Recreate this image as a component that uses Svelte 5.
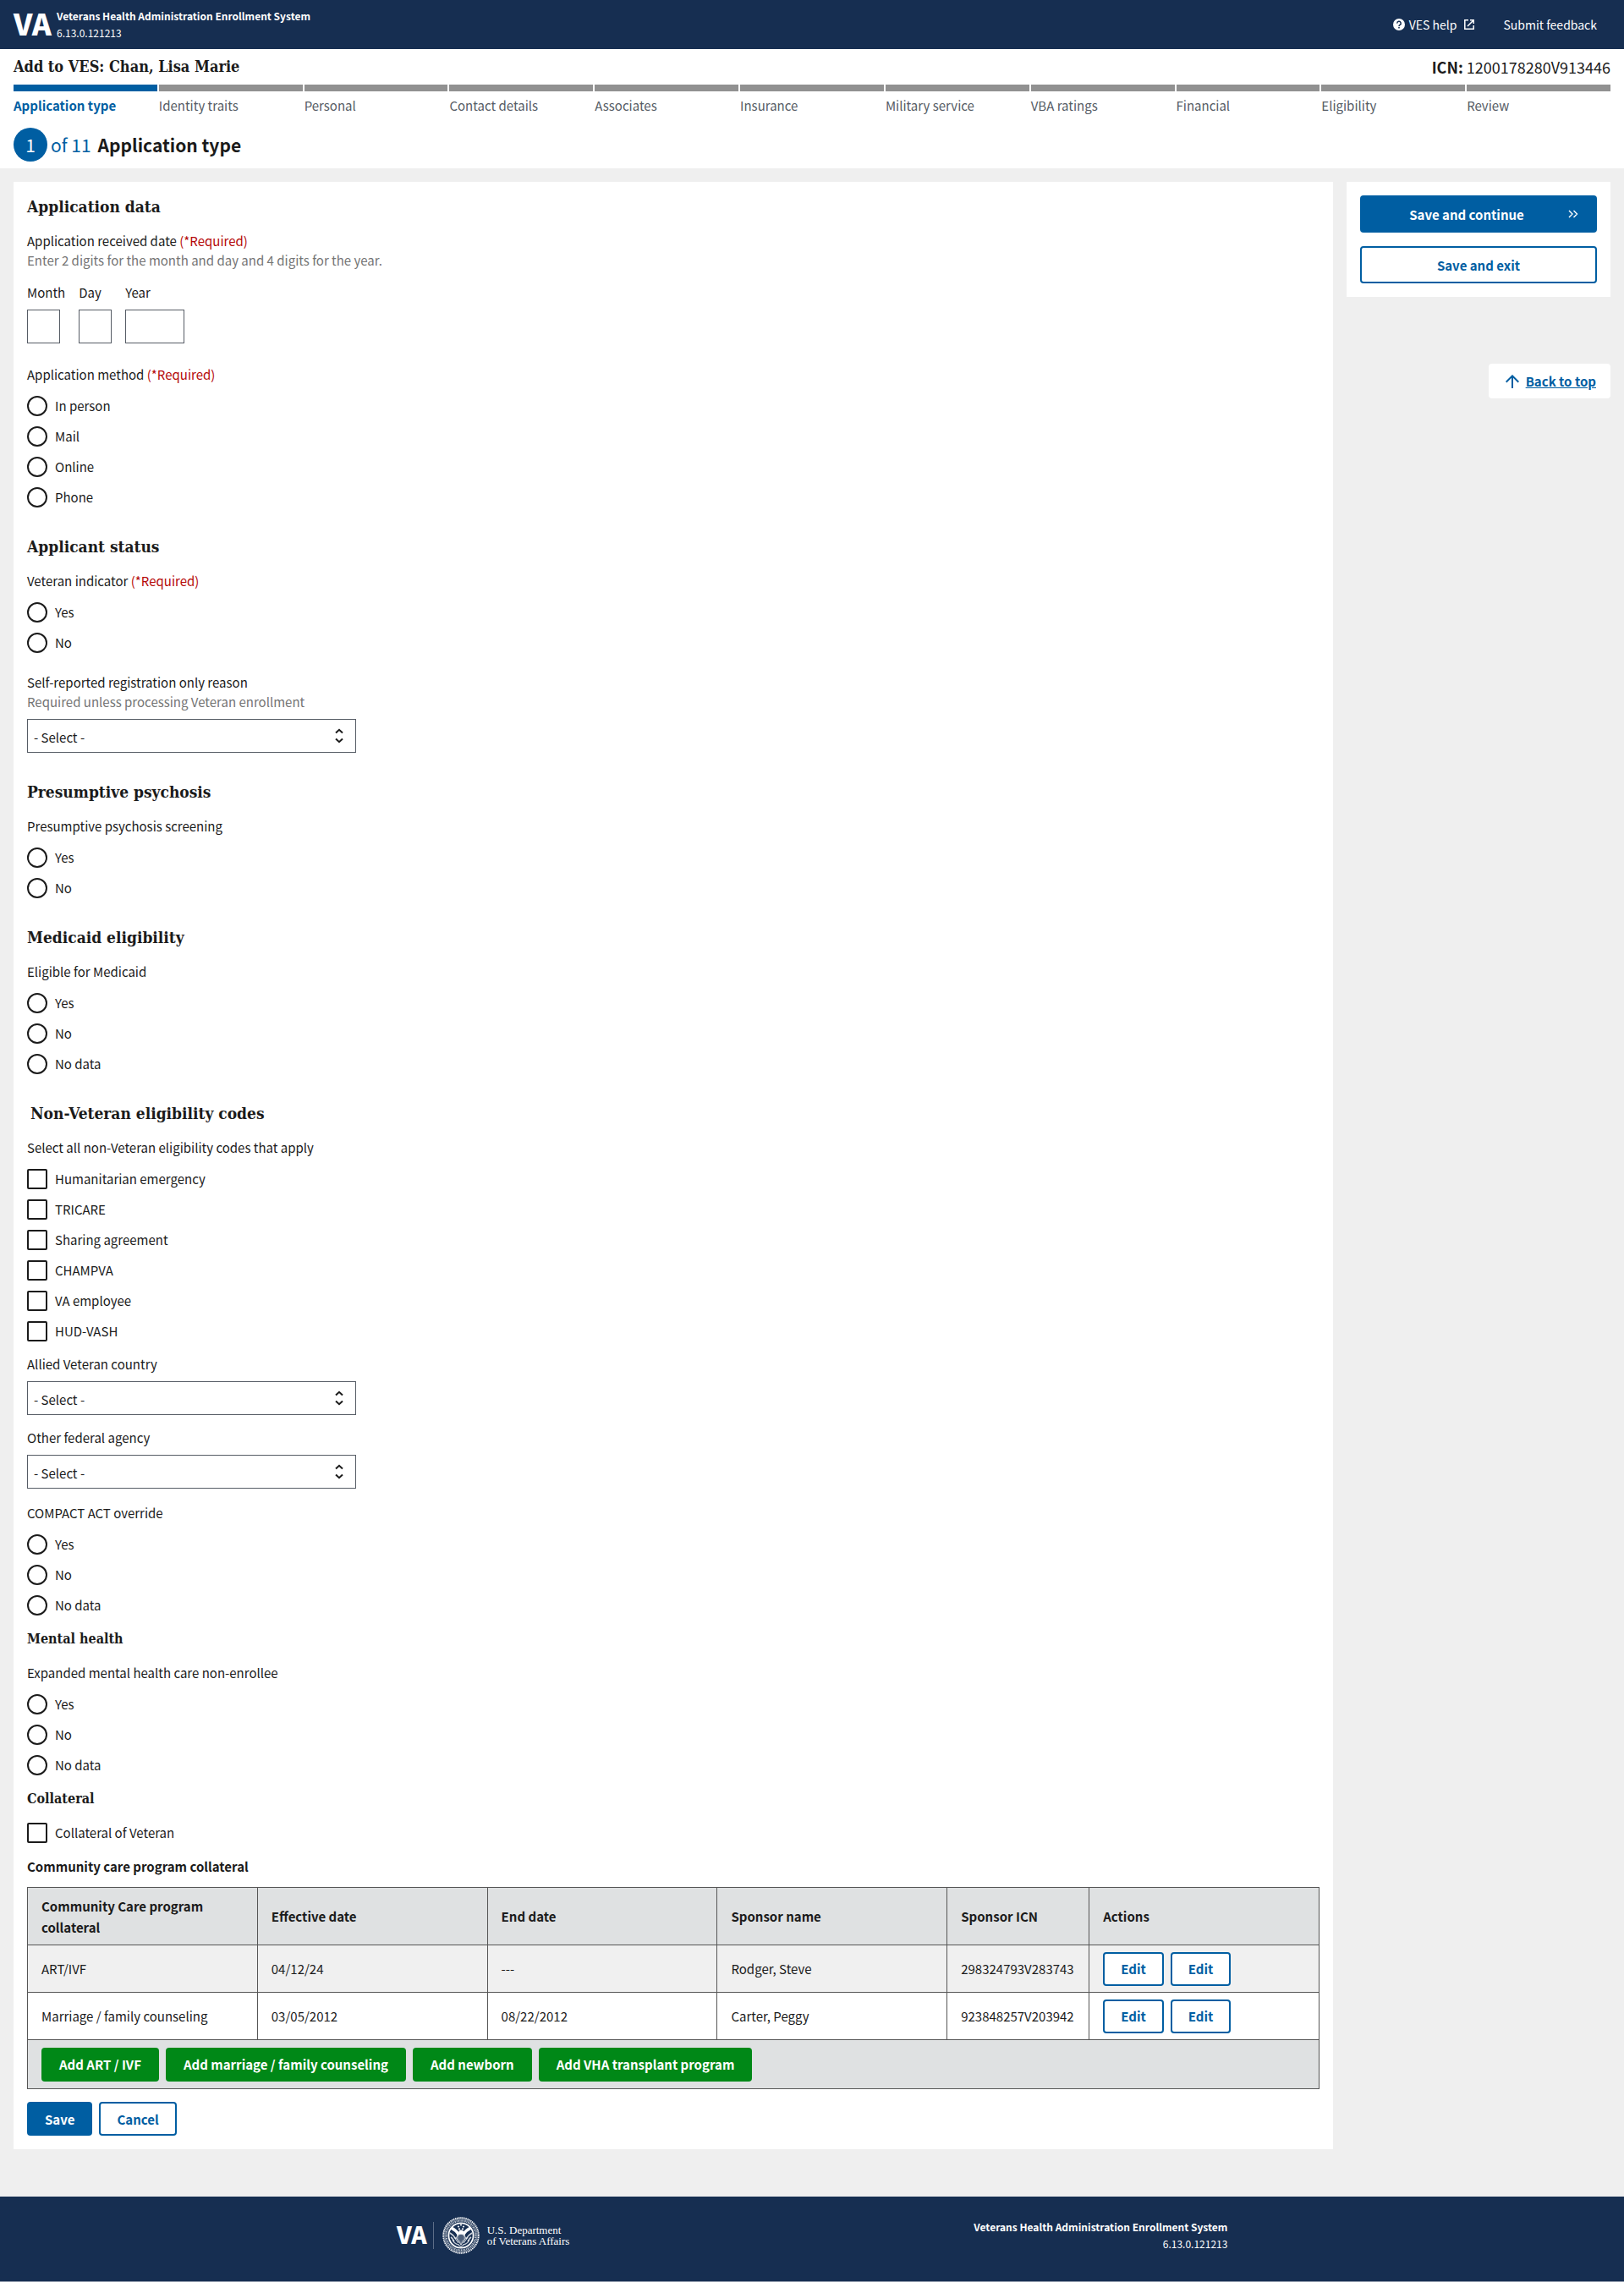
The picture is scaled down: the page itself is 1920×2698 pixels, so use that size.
<script lang="ts">
  interface ChoiceGroup {
    legend: string
    name: string
    type?: 'radio' | 'checkbox'
    required?: boolean
    options: string[]
  }

  interface SelectField {
    id: string
    label: string
    hint?: string
  }

  const steps = [
    'Application type',
    'Identity traits',
    'Personal',
    'Contact details',
    'Associates',
    'Insurance',
    'Military service',
    'VBA ratings',
    'Financial',
    'Eligibility',
    'Review',
  ];
  const currentStep = 0;

  const dateParts = [
    {id: 'month', label: 'Month', length: 2},
    {id: 'day', label: 'Day', length: 2},
    {id: 'year', label: 'Year', length: 4},
  ];

  const columns = [
    'Community Care program collateral',
    'Effective date',
    'End date',
    'Sponsor name',
    'Sponsor ICN',
    'Actions',
  ];

  const programs = [
    {program: 'ART/IVF', start: '04/12/24', end: '---', sponsor: 'Rodger, Steve', icn: '298324793V283743'},
    {program: 'Marriage / family counseling', start: '03/05/2012', end: '08/22/2012', sponsor: 'Carter, Peggy', icn: '923848257V203942'},
  ];

  const addActions = ['Add ART / IVF', 'Add marriage / family counseling', 'Add newborn', 'Add VHA transplant program'];
</script>

{#snippet choices({legend, name, type = 'radio', required = false, options}: ChoiceGroup)}
  <fieldset class="group">
    <legend>{legend} {#if required}<span class="required">(*Required)</span>{/if}</legend>
    <div class="options">
      {#each options as option}
        <label class="choice">
          <input {type} {name} value={option} />
          <span>{option}</span>
        </label>
      {/each}
    </div>
  </fieldset>
{/snippet}

{#snippet dropdown({id, label, hint}: SelectField)}
  <div class="field">
    <label for={id}>{label}</label>
    {#if hint}<p class="hint">{hint}</p>{/if}
    <div class="select">
      <select {id}>
        <option>- Select -</option>
      </select>
      <svg width="10" height="18" viewBox="0 0 10 18" fill="none" stroke="currentColor" stroke-width="2" aria-hidden="true">
        <path d="M1 5.5 5 1.8l4 3.7M1 12.5l4 3.7 4-3.7" />
      </svg>
    </div>
  </div>
{/snippet}

{#snippet vaMark()}
  <svg class="va" width="44" height="28" viewBox="0 0 44 28" role="img" aria-label="VA">
    <text x="0" y="27">VA</text>
  </svg>
{/snippet}

<div class="page">
  <header class="topbar">
    <div class="brand">
      {@render vaMark()}
      <div class="system">
        <strong>Veterans Health Administration Enrollment System</strong>
        <span>6.13.0.121213</span>
      </div>
    </div>
    <nav class="links" aria-label="Support">
      <a href="#help">
        <svg width="14" height="14" viewBox="0 0 14 14" aria-hidden="true">
          <circle cx="7" cy="7" r="7" fill="#fff" />
          <path d="M4.8 5.6a2.2 2.2 0 1 1 3.3 1.8c-.8.5-1.1.8-1.1 1.5" fill="none" stroke="#162e51" stroke-width="1.5" />
          <circle cx="7" cy="10.7" r=".9" fill="#162e51" />
        </svg>
        VES help
        <svg class="external" width="14" height="14" viewBox="0 0 14 14" fill="none" stroke="currentColor" stroke-width="1.5" aria-hidden="true">
          <path d="M6 1.8H1.8v10.4h10.4V8M8 1.8h4.2V6M12 2 5 9" />
        </svg>
      </a>
      <a href="#feedback">Submit feedback</a>
    </nav>
  </header>

  <div class="subheader">
    <div class="person">
      <h1>Add to VES: Chan, Lisa Marie</h1>
      <p><strong>ICN:</strong> 1200178280V913446</p>
    </div>
    <ol class="steps">
      {#each steps as step, i}
        <li class:current={i === currentStep}>{step}</li>
      {/each}
    </ol>
    <div class="progress">
      <span class="number">{currentStep + 1}</span>
      <span class="total">of {steps.length}</span>
      <strong>{steps[currentStep]}</strong>
    </div>
  </div>

  <div class="layout">
    <main class="card">
      <section>
        <h2>Application data</h2>
        <fieldset class="date">
          <legend>Application received date <span class="required">(*Required)</span></legend>
          <p class="hint">Enter 2 digits for the month and day and 4 digits for the year.</p>
          <div class="parts">
            {#each dateParts as part}
              <div class="part">
                <label for={part.id}>{part.label}</label>
                <input id={part.id} class:wide={part.length === 4} type="text" inputmode="numeric" maxlength={part.length} />
              </div>
            {/each}
          </div>
        </fieldset>
        {@render choices({legend: 'Application method', name: 'method', required: true, options: ['In person', 'Mail', 'Online', 'Phone']})}
      </section>

      <section>
        <h2>Applicant status</h2>
        {@render choices({legend: 'Veteran indicator', name: 'veteran', required: true, options: ['Yes', 'No']})}
        <div class="spaced">
          {@render dropdown({id: 'reason', label: 'Self-reported registration only reason', hint: 'Required unless processing Veteran enrollment'})}
        </div>
      </section>

      <section>
        <h2>Presumptive psychosis</h2>
        {@render choices({legend: 'Presumptive psychosis screening', name: 'psychosis', options: ['Yes', 'No']})}
      </section>

      <section>
        <h2>Medicaid eligibility</h2>
        {@render choices({legend: 'Eligible for Medicaid', name: 'medicaid', options: ['Yes', 'No', 'No data']})}
      </section>

      <section>
        <h2 class="indent">Non-Veteran eligibility codes</h2>
        {@render choices({
          legend: 'Select all non-Veteran eligibility codes that apply',
          name: 'codes',
          type: 'checkbox',
          options: ['Humanitarian emergency', 'TRICARE', 'Sharing agreement', 'CHAMPVA', 'VA employee', 'HUD-VASH'],
        })}
        {@render dropdown({id: 'country', label: 'Allied Veteran country'})}
        {@render dropdown({id: 'agency', label: 'Other federal agency'})}
        {@render choices({legend: 'COMPACT ACT override', name: 'compact', options: ['Yes', 'No', 'No data']})}

        <h3>Mental health</h3>
        {@render choices({legend: 'Expanded mental health care non-enrollee', name: 'mental', options: ['Yes', 'No', 'No data']})}

        <h3>Collateral</h3>
        <label class="choice">
          <input type="checkbox" name="collateral" />
          <span>Collateral of Veteran</span>
        </label>

        <h4 id="programs-title">Community care program collateral</h4>
        <table aria-labelledby="programs-title">
          <thead>
            <tr>
              {#each columns as column}
                <th scope="col" class:icn={column === 'Sponsor ICN'}>{column}</th>
              {/each}
            </tr>
          </thead>
          <tbody>
            {#each programs as row}
              <tr>
                <td>{row.program}</td>
                <td>{row.start}</td>
                <td>{row.end}</td>
                <td>{row.sponsor}</td>
                <td>{row.icn}</td>
                <td>
                  <div class="buttons">
                    <button type="button" class="outline">Edit</button>
                    <button type="button" class="outline">Edit</button>
                  </div>
                </td>
              </tr>
            {/each}
          </tbody>
          <tfoot>
            <tr>
              <td colspan={columns.length}>
                <div class="buttons">
                  {#each addActions as action}
                    <button type="button" class="add">{action}</button>
                  {/each}
                </div>
              </td>
            </tr>
          </tfoot>
        </table>

        <div class="buttons save">
          <button type="button" class="primary">Save</button>
          <button type="button" class="outline">Cancel</button>
        </div>
      </section>
    </main>

    <aside>
      <div class="actions">
        <button type="button" class="primary tall">
          <span>Save and continue</span>
          <svg width="12" height="10" viewBox="0 0 12 10" fill="none" stroke="currentColor" stroke-width="1.4" aria-hidden="true">
            <path d="m1 1 4 4-4 4M6.5 1l4 4-4 4" />
          </svg>
        </button>
        <button type="button" class="outline tall">Save and exit</button>
      </div>
      <a class="top" href="#top">
        <svg width="16" height="16" viewBox="0 0 16 16" fill="none" stroke="currentColor" stroke-width="2" aria-hidden="true">
          <path d="M8 16V1.5M.7 8.7 8 1.4l7.3 7.3" />
        </svg>
        <span>Back to top</span>
      </a>
    </aside>
  </div>

  <footer>
    <div class="agency">
      {@render vaMark()}
      <span class="rule"></span>
      <svg class="seal" width="44" height="44" viewBox="0 0 44 44" fill="none" stroke="#fff" aria-hidden="true">
        <circle cx="22" cy="22" r="20.8" stroke-width="1.8" stroke-dasharray="1.4 .7" />
        <circle cx="22" cy="22" r="19.2" stroke-width=".5" />
        <circle cx="22" cy="22" r="17.4" stroke-width="2.2" stroke-dasharray="1 .8 1.5 .7" opacity=".7" />
        <circle cx="22" cy="22" r="14.6" stroke-width="1.8" />
        <!-- flags -->
        <path d="M10.500 13c3 1.500 7 4.500 9.500 8.500M33.500 13c-3 1.500-7 4.500-9.500 8.500" stroke-width="3.600" />
        <path d="M9 19c2.500 1.500 5 4 7 7M35 19c-2.500 1.500-5 4-7 7M10 24c1.500 1 3 3 4 5M34 24c-1.500 1-3 3-4 5" stroke-width="1.600" opacity=".8" />
        <!-- eagle -->
        <path d="M18.500 20h7l2 5-5.500 8-5.500-8z" fill="#fff" fill-opacity=".4" stroke-width=".8" />
        <path d="M20 20.500v7M22 20.500v9M24 20.500v7" stroke="#162e51" stroke-width=".8" />
        <path d="M12 27c1.500 4 4.500 5.500 8 6M32 27c-1.500 4-4.500 5.500-8 6M14 24l5 7M30 24l-5 7M15 31l7 4 7-4" stroke-width="1.200" opacity=".75" />
        <path d="M19.500 17c.5-1.500 3.500-2 5-.5l1.500 1-1.500 1-.5 2h-4z" fill="#fff" stroke="none" />
        <g fill="#fff" stroke="none">
          <circle cx="19" cy="11.500" r="1.100" />
          <circle cx="22" cy="9.500" r="1.100" />
          <circle cx="25" cy="11.500" r="1.100" />
          <circle cx="20" cy="14.300" r="1.100" />
          <circle cx="24" cy="14.300" r="1.100" />
        </g>
      </svg>
      <p class="department">U.S. Department<br />of Veterans Affairs</p>
    </div>
    <div class="system end">
      <strong>Veterans Health Administration Enrollment System</strong>
      <span>6.13.0.121213</span>
    </div>
  </footer>
</div>

<style>
  :global(body) {
    margin: 0;
    background: #efefef;
  }

  .page {
    --navy: #162e51;
    --blue: #005ea2;
    --ink: #1b1b1b;
    --slab: 'DejaVu Serif Condensed', 'DejaVu Serif', serif;
    --line: 1px solid #565c65;
    color: var(--ink);
    font-family: 'Noto Sans CJK SC', 'Noto Sans', sans-serif;
    font-size: 15px;
    line-height: 23px;
  }

  .page * {
    box-sizing: border-box;
  }

  h1,
  h2,
  h3,
  h4,
  p,
  ol,
  fieldset,
  legend {
    margin: 0;
    padding: 0;
    border: 0;
  }

  button,
  input,
  select {
    font: inherit;
    color: inherit;
  }

  /* top bar */
  .topbar {
    display: flex;
    align-items: center;
    justify-content: space-between;
    height: 58px;
    padding: 0 32px 0 16px;
    background: var(--navy);
    color: #fff;
  }

  .brand {
    display: flex;
    align-items: center;
    gap: 7px;
  }

  .va {
    display: block;
    overflow: visible;
    fill: #fff;
    font-size: 35px;
    font-weight: 900;
  }

  .system {
    display: flex;
    flex-direction: column;
    font-size: 12px;
    line-height: 20px;
  }

  .links {
    display: flex;
    gap: 34px;
    font-size: 14px;
  }

  .links a {
    display: flex;
    align-items: center;
    gap: 5px;
    color: #fff;
    text-decoration: none;
  }

  .external {
    margin-left: 2px;
  }

  /* applicant name and step indicator */
  .subheader {
    padding: 9px 16px 8px;
    background: #fff;
  }

  .person {
    display: flex;
    align-items: center;
    justify-content: space-between;
    font-size: 18px;
    line-height: 24px;
  }

  h1 {
    font-family: var(--slab);
    font-size: 18px;
    font-weight: 700;
  }

  .steps {
    display: flex;
    gap: 2px;
    margin-top: 9px;
    list-style: none;
  }

  .steps li {
    flex: 1;
    padding-top: 5px;
    border-top: 8px solid #919191;
    color: #565c65;
  }

  .steps .current {
    border-color: var(--blue);
    color: var(--blue);
    font-weight: 700;
  }

  .progress {
    display: flex;
    align-items: center;
    margin-top: 15px;
    font-size: 21px;
    line-height: 40px;
  }

  .number {
    width: 40px;
    height: 40px;
    border-radius: 50%;
    background: var(--blue);
    color: #fff;
    text-align: center;
  }

  .total {
    margin: 0 8px 0 4px;
    color: var(--blue);
  }

  /* body */
  .layout {
    display: flex;
    align-items: flex-start;
    gap: 16px;
    padding: 16px 16px 56px;
  }

  .card {
    flex: 1;
    min-width: 0;
    padding: 17px 16px 16px;
    background: #fff;
  }

  h2 {
    margin-bottom: 17px;
    font-family: var(--slab);
    font-size: 19px;
    line-height: 24px;
  }

  section + section {
    margin-top: 34px;
  }

  .indent {
    padding-left: 4px;
  }

  h3 {
    margin: 16px 0;
    font-family: var(--slab);
    font-size: 16px;
    line-height: 24px;
  }

  h4 {
    margin: 16px 0 13px;
    font-size: 15px;
  }

  .required {
    color: #b50909;
  }

  .hint {
    color: #757575;
  }

  .parts {
    display: flex;
    gap: 16px;
    margin-top: 15px;
  }

  .part {
    display: flex;
    flex-direction: column;
    gap: 9px;
  }

  .part input {
    width: 39px;
    height: 40px;
    border: var(--line);
    text-align: center;
  }

  .part .wide {
    width: 70px;
  }

  .date + .group {
    margin-top: 25px;
  }

  .options {
    display: flex;
    flex-direction: column;
    gap: 12px;
    padding-top: 14px;
  }

  .choice {
    display: flex;
    align-items: center;
    gap: 9px;
    width: fit-content;
    line-height: 24px;
  }

  .choice input {
    appearance: none;
    flex: none;
    width: 24px;
    height: 24px;
    margin: 0;
    border: 2px solid var(--ink);
    border-radius: 50%;
    background: #fff;
  }

  .choice input[type='checkbox'] {
    border-radius: 2px;
  }

  .choice input:checked {
    background: var(--blue);
    box-shadow: inset 0 0 0 2px #fff;
  }

  .group + .field,
  .field + .field {
    margin-top: 15px;
  }

  .field + .group {
    margin-top: 17px;
  }

  .spaced {
    margin-top: 23px;
  }

  .field label {
    display: block;
  }

  .select {
    position: relative;
    width: 389px;
    max-width: 100%;
    margin-top: 9px;
  }

  .select svg {
    position: absolute;
    top: 11px;
    right: 15px;
    pointer-events: none;
  }

  select {
    appearance: none;
    display: block;
    width: 100%;
    height: 40px;
    padding: 2px 7px 0;
    border: var(--line);
    border-radius: 0;
    background: #fff;
  }

  /* program table */
  table {
    width: 100%;
    table-layout: fixed;
    border-collapse: collapse;
  }

  th,
  td {
    height: 56px;
    padding: 0 15px 0 16px;
    border: 1px solid #565656;
    text-align: left;
  }

  th {
    height: 68px;
    background: #dfe1e2;
    line-height: 25px;
  }

  .icn {
    width: 168px;
  }

  tbody tr:nth-child(odd) {
    background: #f0f0f0;
  }

  tfoot td {
    height: 58px;
    background: #dfe1e2;
  }

  .buttons {
    display: flex;
    flex-wrap: wrap;
    gap: 8px;
  }

  .save {
    margin-top: 15px;
  }

  button {
    height: 40px;
    padding: 0 21px;
    border: 0;
    border-radius: 4px;
    color: #fff;
    font-weight: 700;
    cursor: pointer;
  }

  .primary {
    background: var(--blue);
  }

  .outline {
    padding: 0 19px;
    border: 2px solid var(--blue);
    background: #fff;
    color: var(--blue);
  }

  .add {
    background: #008817;
  }

  /* side column */
  aside {
    display: flex;
    flex-direction: column;
    align-items: flex-end;
    width: 312px;
  }

  .actions {
    display: flex;
    flex-direction: column;
    gap: 16px;
    width: 100%;
    padding: 16px;
    background: #fff;
  }

  .tall {
    height: 44px;
  }

  .primary.tall {
    display: flex;
    align-items: center;
    padding: 0 22px;
  }

  .primary.tall span {
    flex: 1;
    padding-right: 16px;
  }

  .top {
    display: flex;
    align-items: center;
    gap: 8px;
    margin-top: 79px;
    padding: 9px 17px 9px 20px;
    border-radius: 4px;
    background: #fff;
    color: var(--blue);
    font-weight: 700;
  }

  footer {
    display: flex;
    align-items: center;
    justify-content: center;
    gap: 478px;
    height: 101px;
    padding-bottom: 8px;
    border-bottom: 1px solid #8b96a8;
    background: var(--navy);
    color: #fff;
  }

  .agency {
    display: flex;
    align-items: center;
  }

  .agency .va {
    width: 35px;
    height: 24px;
  }

  .rule {
    width: 1px;
    height: 32px;
    margin: 0 10px 0 8px;
    background: #5c6d87;
  }

  .department {
    margin-left: 9px;
    font-family: 'Liberation Serif', serif;
    font-size: 13px;
    line-height: 13px;
  }

  .end {
    text-align: right;
  }
</style>
